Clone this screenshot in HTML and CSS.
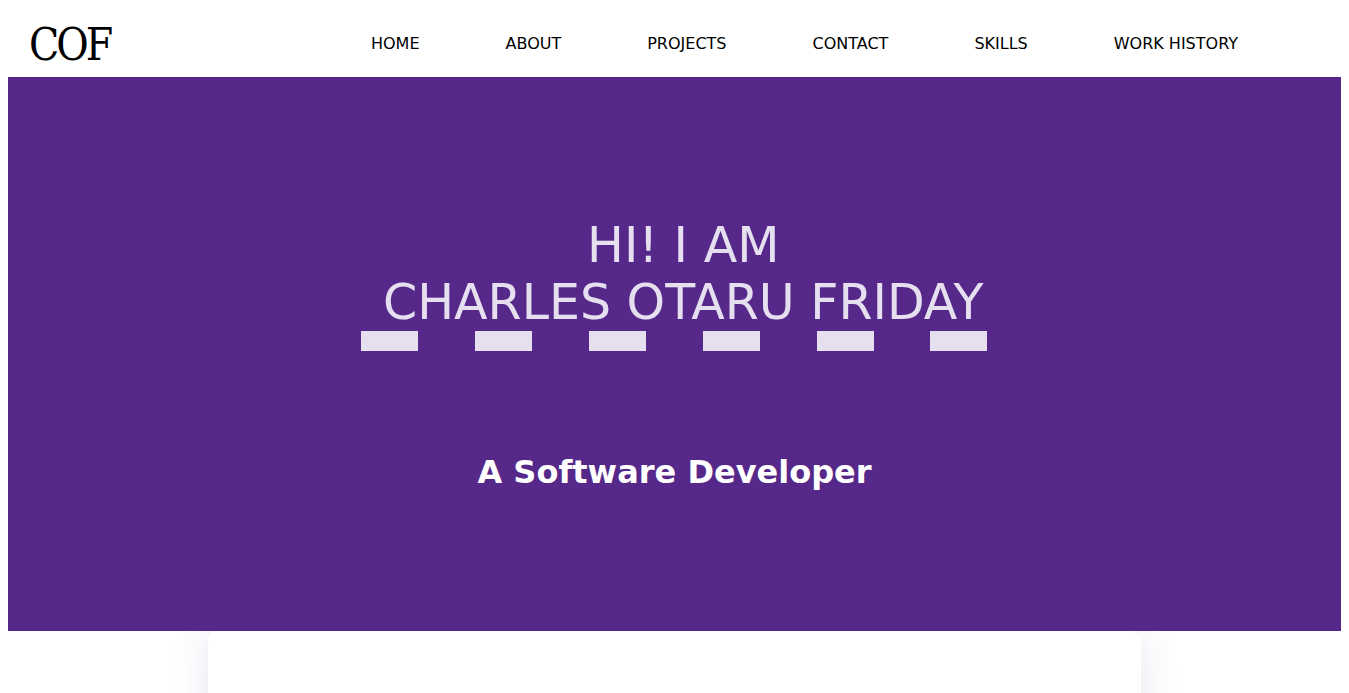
FILE: index.html
```html
<!DOCTYPE html>
<html lang="en">
<head>
<meta charset="utf-8">
<title>COF</title>
<link rel="stylesheet" href="styles.css">
</head>
<body>
<header class="site-header">
  <div class="logo">COF</div>
  <nav class="nav">
    <a href="#home">HOME</a>
    <a href="#about">ABOUT</a>
    <a href="#projects">PROJECTS</a>
    <a href="#contact">CONTACT</a>
    <a href="#skills">SKILLS</a>
    <a href="#work">WORK HISTORY</a>
  </nav>
</header>
<section class="hero">
  <div class="intro">
    <h1 class="intro-title">&nbsp;HI! I AM<br>&nbsp;CHARLES OTARU FRIDAY</h1>
    <div class="dashes"><span></span><span></span><span></span><span></span><span></span><span></span></div>
  </div>
  <h2 class="role">A Software Developer</h2>
</section>
<main class="card"></main>
</body>
</html>
```
FILE: styles.css
```css
body {
  margin: 8px;
  background: #fff;
  font-family: "DejaVu Sans", sans-serif;
}
.site-header {
  height: 69px;
  display: flex;
  align-items: center;
  padding-left: 21px;
  padding-right: 103px;
}
.logo {
  font-family: "DejaVu Serif Condensed", "DejaVu Serif", serif;
  font-size: 44px;
  letter-spacing: -3px;
  color: #000;
  line-height: 1;
  padding-top: 4px;
}
.nav {
  margin-left: auto;
  display: flex;
  gap: 86px;
  padding-top: 2px;
}
.nav a {
  color: #000;
  text-decoration: none;
  font-size: 16px;
}
.hero {
  position: relative;
  z-index: 1;
  background: #55288a;
  height: 554px;
  box-sizing: border-box;
  padding-top: 140px;
  display: flex;
  flex-direction: column;
  align-items: center;
}
.intro {
  display: flex;
  flex-direction: column;
  align-items: stretch;
  padding: 0 2px 0 4px;
}
.intro-title {
  margin: 0;
  font-weight: normal;
  font-size: 49px;
  line-height: 57px;
  color: #e6dff0;
  text-align: center;
}
.dashes {
  display: flex;
  justify-content: space-between;
  height: 20px;
  margin: 0 -4px 0 -6px;
}
.dashes span {
  width: 57px;
  background: #e6dff0;
}
.role {
  margin: 102px 0 0;
  font-size: 32px;
  font-weight: bold;
  color: #fff;
}
.card {
  display: block;
  width: 933px;
  height: 300px;
  margin: 0 auto;
  background: #fff;
  border-radius: 10px;
  box-shadow: 0 0 40px rgba(86, 40, 138, 0.12);
}
```
